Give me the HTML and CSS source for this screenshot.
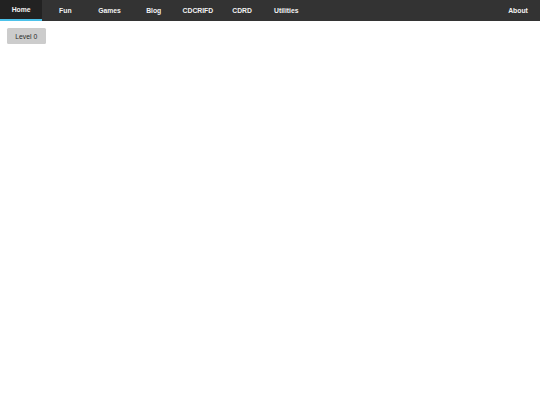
FILE: index.html
```html
<!DOCTYPE html>
<html>
<head>
<meta charset="utf-8">
<link rel="stylesheet" href="styles.css">
</head>
<body>
<nav class="navbar">
  <ul class="nav-left">
    <li class="tab active">Home</li>
    <li class="tab">Fun</li>
    <li class="tab">Games</li>
    <li class="tab">Blog</li>
    <li class="tab">CDCRIFD</li>
    <li class="tab">CDRD</li>
    <li class="tab">Utilities</li>
  </ul>
  <ul class="nav-right">
    <li class="tab">About</li>
  </ul>
</nav>
<main class="content">
  <button class="level-btn">Level 0</button>
</main>
</body>
</html>
```

FILE: styles.css
```css
html, body {
  margin: 0;
  padding: 0;
  background: #ffffff;
  font-family: "Liberation Sans", Arial, sans-serif;
}

.navbar {
  display: flex;
  justify-content: space-between;
  height: 21px;
  background: #333333;
}

.nav-left, .nav-right {
  display: flex;
  gap: 1.9px;
  list-style: none;
  margin: 0;
  padding: 0;
}

.tab {
  box-sizing: border-box;
  width: 42.3px;
  height: 21px;
  display: flex;
  align-items: center;
  justify-content: center;
  padding-bottom: 1px;
  color: #f2f2f2;
  font-size: 6.8px;
  font-weight: bold;
}

.tab.active {
  background: #222222;
  border-bottom: 2px solid #4cc2ea;
  padding-bottom: 0;
}

.nav-right .tab {
  width: 44px;
}

.content {
  display: flex;
  align-items: flex-start;
  padding: 7px 0 0 7px;
}

.level-btn {
  box-sizing: border-box;
  width: 38.5px;
  height: 16.3px;
  padding: 0;
  border: none;
  border-radius: 1.5px;
  background: #cccccc;
  color: #2a2a2a;
  font-family: "Liberation Sans", Arial, sans-serif;
  font-size: 6.8px;
}
```
